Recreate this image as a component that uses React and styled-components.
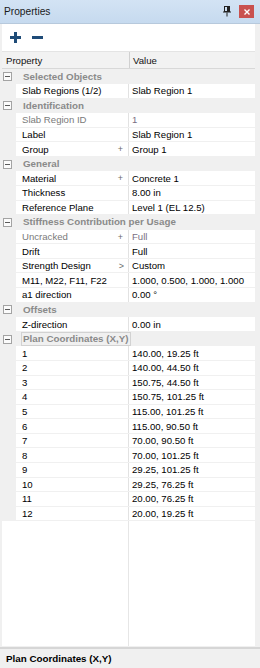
import React from "react";
import styled, { createGlobalStyle } from "styled-components";

const Global = createGlobalStyle`
  html, body { margin: 0; padding: 0; }
  body { width: 260px; height: 668px; overflow: hidden; background: #f0f0f0; }
  * { box-sizing: border-box; }
`;

const Frame = styled.div`
  width: 260px;
  height: 668px;
  display: flex;
  flex-direction: column;
  background: #f0f0f0;
  font-family: "Liberation Sans", Arial, sans-serif;
  font-size: 9.6px;
  color: #000;
`;

const TitleBar = styled.div`
  height: 24px;
  flex: none;
  display: flex;
  align-items: center;
  padding: 0 6px 0 4px;
  background: linear-gradient(#d3e3f4, #c6daef);
  border-bottom: 1px solid #b7c9dc;
`;

const Title = styled.div`
  flex: 1;
  font-size: 10.2px;
  color: #1a1a1a;
`;

const PinBox = styled.div`
  width: 10px;
  height: 12px;
  margin-right: 7px;
  display: flex;
  align-items: center;
  justify-content: center;
`;

const CloseBtn = styled.div`
  width: 15px;
  height: 13px;
  background: #c9514f;
  display: flex;
  align-items: center;
  justify-content: center;
`;

const Body = styled.div`
  flex: 1;
  display: flex;
  flex-direction: column;
  padding: 0 5px 0 2px;
  min-height: 0;
`;

const Toolbar = styled.div`
  height: 27px;
  flex: none;
  background: #fff;
  display: flex;
  align-items: center;
  gap: 10px;
  padding-left: 7px;
`;

const ToolIcon = styled.div`
  width: 12px;
  height: 12px;
  display: flex;
  align-items: center;
  justify-content: center;
`;

const Header = styled.div`
  height: 18.4px;
  flex: none;
  display: grid;
  grid-template-columns: 128px 1fr;
  background: #f2f2f2;
  border-top: 1px solid #e4e4e4;
  border-bottom: 1px solid #d8d8d8;
`;

const HeadCell = styled.div`
  display: flex;
  align-items: center;
  padding-left: ${(p) => p.$pad}px;
  border-right: ${(p) => (p.$sep ? "1px solid #d0d0d0" : "none")};
  font-size: 9.6px;
  color: #111;
`;

const Grid = styled.div`
  flex: 1;
  display: flex;
  flex-direction: column;
  background: #fff;
  min-height: 0;
`;

const Row = styled.div`
  height: 14.59px;
  flex: none;
  display: grid;
  grid-template-columns: 14px 113px 1fr;
  background: #f0f0f0;
`;

const CatRow = styled.div`
  height: 14.59px;
  flex: none;
  display: flex;
  align-items: center;
  background: #f0f0f0;
  padding-left: 1px;
`;

const ExpandBox = styled.div`
  width: 9px;
  height: 9px;
  border: 1px solid #a3a3a3;
  background: #fbfbfb;
  position: relative;
  margin-right: 9px;
  &::after {
    content: "";
    position: absolute;
    left: 1px;
    right: 1px;
    top: 3px;
    height: 1px;
    background: #5a5a5a;
  }
`;

const CatText = styled.div`
  font-weight: bold;
  color: #8a8a8a;
  font-size: 9.8px;
  line-height: 12px;
  padding: 0 1px;
  border: 1px solid ${(p) => (p.$focus ? "#d2d2d2" : "transparent")};
  white-space: nowrap;
`;

const NameCell = styled.div`
  background: #fff;
  margin-bottom: 1px;
  display: flex;
  align-items: center;
  padding-left: 6px;
  padding-right: 4px;
  color: ${(p) => (p.$disabled ? "#7a7a7a" : "#000")};
  border-right: 1px solid #e2e2e2;
  white-space: nowrap;
  overflow: hidden;
`;

const NameText = styled.span`
  flex: 1;
`;

const Marker = styled.span`
  color: #6a6a6a;
  font-size: 9px;
  margin-right: ${(p) => (p.$gt ? 0 : 1)}px;
`;

const ValueCell = styled.div`
  background: #fff;
  margin-bottom: 1px;
  display: flex;
  align-items: center;
  padding-left: 3px;
  color: ${(p) => (p.$disabled ? "#7a6f82" : "#000")};
  white-space: nowrap;
  overflow: hidden;
`;

const Filler = styled.div`
  flex: 1;
  display: grid;
  grid-template-columns: 127px 1fr;
`;

const FillerCol = styled.div`
  border-right: 1px solid #e6e6e6;
`;

const Description = styled.div`
  height: 21px;
  flex: none;
  border-top: 2px solid #d6d6d6;
  margin-top: 1px;
  display: flex;
  align-items: center;
  padding-left: 6px;
  font-weight: bold;
  font-size: 9.8px;
  color: #000;
  background: #f0f0f0;
`;

const rows = [
  { cat: "Selected Objects" },
  { n: "Slab Regions (1/2)", v: "Slab Region 1" },
  { cat: "Identification" },
  { n: "Slab Region ID", v: "1", d: true },
  { n: "Label", v: "Slab Region 1" },
  { n: "Group", v: "Group 1", m: "+" },
  { cat: "General" },
  { n: "Material", v: "Concrete 1", m: "+" },
  { n: "Thickness", v: "8.00 in" },
  { n: "Reference Plane", v: "Level 1 (EL 12.5)" },
  { cat: "Stiffness Contribution per Usage" },
  { n: "Uncracked", v: "Full", m: "+", d: true },
  { n: "Drift", v: "Full" },
  { n: "Strength Design", v: "Custom", m: ">" },
  { n: "M11, M22, F11, F22", v: "1.000, 0.500, 1.000, 1.000" },
  { n: "a1 direction", v: "0.00 °" },
  { cat: "Offsets" },
  { n: "Z-direction", v: "0.00 in" },
  { cat: "Plan Coordinates (X,Y)", focus: true },
  { n: "1", v: "140.00, 19.25 ft" },
  { n: "2", v: "140.00, 44.50 ft" },
  { n: "3", v: "150.75, 44.50 ft" },
  { n: "4", v: "150.75, 101.25 ft" },
  { n: "5", v: "115.00, 101.25 ft" },
  { n: "6", v: "115.00, 90.50 ft" },
  { n: "7", v: "70.00, 90.50 ft" },
  { n: "8", v: "70.00, 101.25 ft" },
  { n: "9", v: "29.25, 101.25 ft" },
  { n: "10", v: "29.25, 76.25 ft" },
  { n: "11", v: "20.00, 76.25 ft" },
  { n: "12", v: "20.00, 19.25 ft" },
];

export default function App() {
  return (
    <>
      <Global />
      <Frame>
        <TitleBar>
          <Title>Properties</Title>
          <PinBox>
            <svg width="8" height="11" viewBox="0 0 8 11">
              <rect x="1.5" y="0.5" width="5" height="5" fill="none" stroke="#222" />
              <rect x="4" y="1" width="2" height="4.5" fill="#222" />
              <rect x="0" y="5.5" width="8" height="1" fill="#222" />
              <rect x="3.5" y="6.5" width="1" height="4" fill="#222" />
            </svg>
          </PinBox>
          <CloseBtn>
            <svg width="6" height="6" viewBox="0 0 6 6">
              <path d="M0.5 0.5 L5.5 5.5 M5.5 0.5 L0.5 5.5" stroke="#fff" strokeWidth="1.4" />
            </svg>
          </CloseBtn>
        </TitleBar>
        <Body>
          <Toolbar>
            <ToolIcon>
              <svg width="11" height="11" viewBox="0 0 11 11">
                <rect x="0" y="4" width="11" height="3" fill="#1f4c78" />
                <rect x="4" y="0" width="3" height="11" fill="#1f4c78" />
              </svg>
            </ToolIcon>
            <ToolIcon>
              <svg width="11" height="11" viewBox="0 0 11 11">
                <rect x="0" y="4" width="11" height="3" fill="#1f4c78" />
              </svg>
            </ToolIcon>
          </Toolbar>
          <Header>
            <HeadCell $pad={4} $sep>Property</HeadCell>
            <HeadCell $pad={3}>Value</HeadCell>
          </Header>
          <Grid>
            {rows.map((r, i) =>
              r.cat ? (
                <CatRow key={i}>
                  <ExpandBox />
                  <CatText $focus={r.focus}>{r.cat}</CatText>
                </CatRow>
              ) : (
                <Row key={i}>
                  <div />
                  <NameCell $disabled={r.d}>
                    <NameText>{r.n}</NameText>
                    {r.m && <Marker $gt={r.m === ">"}>{r.m}</Marker>}
                  </NameCell>
                  <ValueCell $disabled={r.d}>{r.v}</ValueCell>
                </Row>
              )
            )}
            <Filler>
              <FillerCol />
              <div />
            </Filler>
          </Grid>
        </Body>
        <Description>Plan Coordinates (X,Y)</Description>
      </Frame>
    </>
  );
}
